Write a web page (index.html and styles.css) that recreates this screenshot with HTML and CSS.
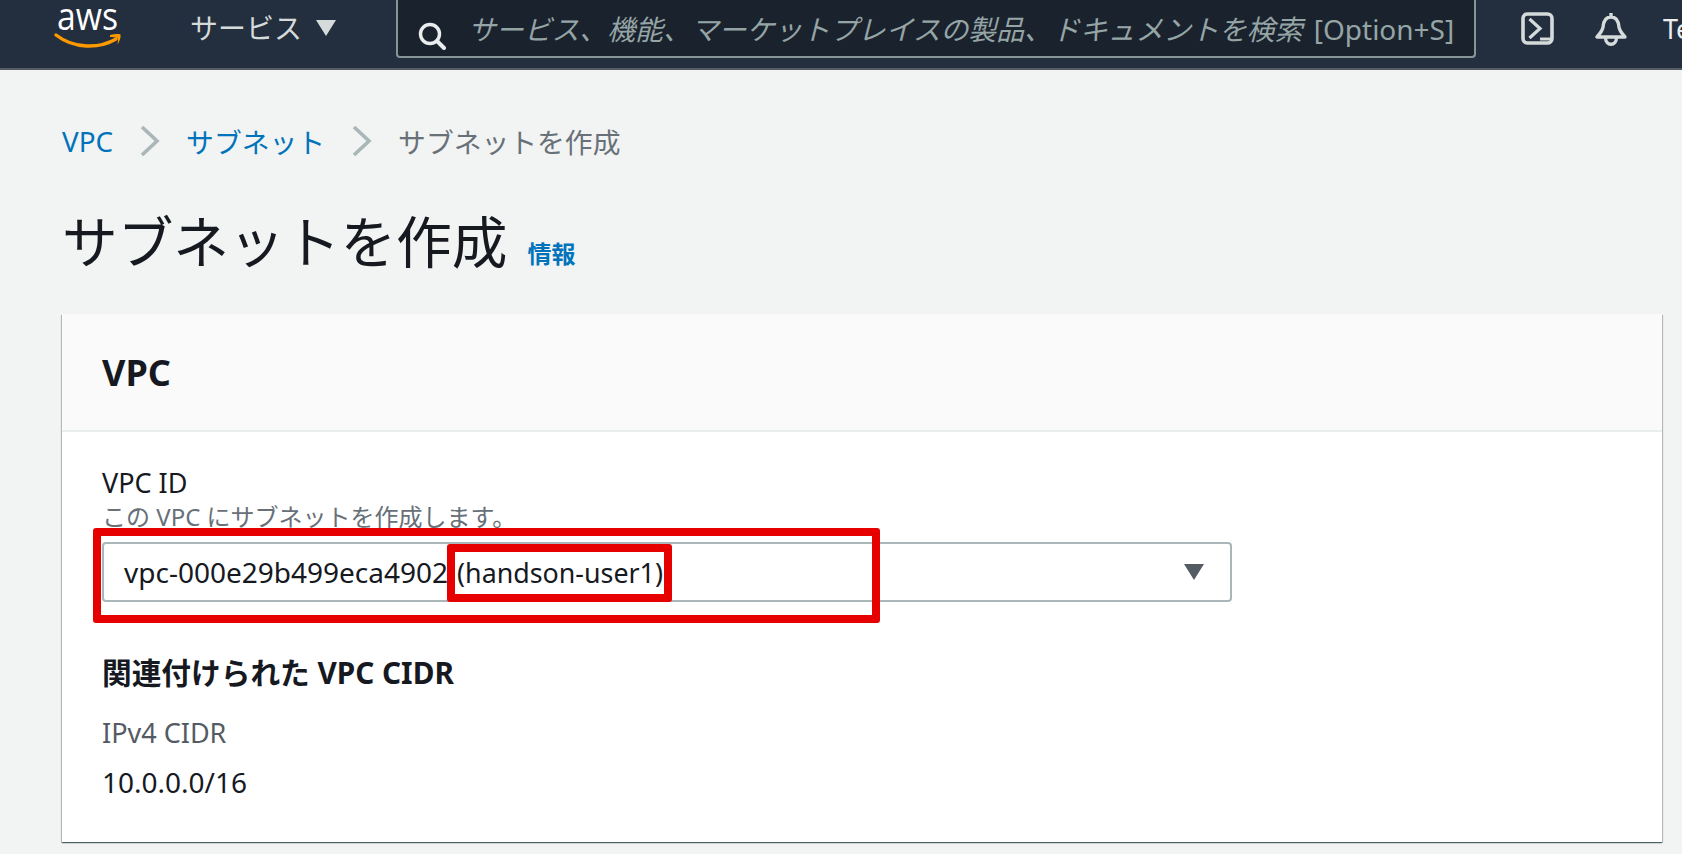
FILE: index.html
```html
<!DOCTYPE html>
<html lang="ja">
<head>
<meta charset="utf-8">
<title>サブネットを作成</title>
<link rel="stylesheet" href="styles.css">
</head>
<body>
<header class="topbar">
  <svg class="logo" width="70" height="50" viewBox="0 0 70 50">
    <text class="logo-text" x="4" y="30" textLength="61" lengthAdjust="spacingAndGlyphs">aws</text>
    <path d="M3 35C21 49 46 49 63 39" fill="none" stroke="#f90" stroke-width="3.4" stroke-linecap="round"/>
    <path d="M57 35C61 34 65 33.700 67.500 34.500C68 37.500 66.500 41.500 64.500 44.500C65 41.500 65.400 39.500 64.600 38.100C63 37.500 60 37 57 37Z" fill="#f90"/>
  </svg>
  <div class="services">
    <span>サービス</span>
    <svg class="services-caret" width="20" height="16" viewBox="0 0 20 16"><path d="M0 0H20L10 16Z" fill="#d5dbdb"/></svg>
  </div>
  <div class="search">
    <svg class="search-icon" width="28" height="28" viewBox="0 0 28 28">
      <circle cx="12" cy="12" r="9.5" fill="none" stroke="#eaeded" stroke-width="3.4"/>
      <path d="M19 19L26 26" stroke="#eaeded" stroke-width="4" stroke-linecap="round"/>
    </svg>
    <span class="search-text">サービス、機能、マーケットプレイスの製品、ドキュメントを検索 <span class="search-key">[Option+S]</span></span>
  </div>
  <svg class="tool-icon terminal" width="33" height="33" viewBox="0 0 33 33">
    <rect x="2" y="2" width="29" height="29" rx="4.500" fill="none" stroke="#d5dbdb" stroke-width="3.600"/>
    <path d="M8.500 7L19 16.500L8.500 26" fill="none" stroke="#d5dbdb" stroke-width="3.200"/>
    <path d="M19 27H31" stroke="#d5dbdb" stroke-width="3"/>
  </svg>
  <svg class="tool-icon bell" width="32" height="34" viewBox="0 0 32 34">
    <path d="M16 1V5M16 5C10 5 8.500 10 8 15C7.500 19 5 21.500 2 25H30C27 21.500 24.500 19 24 15C23.500 10 22 5 16 5Z" fill="none" stroke="#d5dbdb" stroke-width="3.400" stroke-linejoin="round"/>
    <path d="M10.500 25.500C10.500 34.500 21.500 34.500 21.500 25.500" fill="none" stroke="#d5dbdb" stroke-width="3.400"/>
  </svg>
  <span class="account">Te</span>
</header>

<main class="page">
  <nav class="crumbs">
    <a class="link">VPC</a>
    <svg class="crumb-sep" width="20" height="30" viewBox="0 0 20 30"><path d="M2 1L17 15L2 29" fill="none" stroke="#aab7b8" stroke-width="3.600"/></svg>
    <a class="link">サブネット</a>
    <svg class="crumb-sep" width="20" height="30" viewBox="0 0 20 30"><path d="M2 1L17 15L2 29" fill="none" stroke="#aab7b8" stroke-width="3.600"/></svg>
    <span class="crumb-current">サブネットを作成</span>
  </nav>

  <div class="title-row">
    <h1 class="title">サブネットを作成</h1>
    <a class="link info">情報</a>
  </div>

  <section class="card">
    <div class="card-head"><h2 class="card-title">VPC</h2></div>
    <div class="card-body">
      <div class="field-label">VPC ID</div>
      <div class="field-desc">この VPC にサブネットを作成します。</div>
      <div class="select">
        <span class="select-value"><span class="select-id">vpc-000e29b499eca4902</span> <span class="select-name">(handson-user1)</span></span>
        <svg width="20" height="16" viewBox="0 0 20 16"><path d="M0 0H20L10 16Z" fill="#545b64"/></svg>
      </div>
      <h3 class="sub-title">関連付けられた VPC CIDR</h3>
      <div class="kv-key">IPv4 CIDR</div>
      <div class="kv-value">10.0.0.0/16</div>
    </div>
  </section>

  <div class="mark mark-outer"></div>
  <div class="mark mark-inner"></div>
</main>
</body>
</html>
```
FILE: styles.css
```css
* { box-sizing: border-box; }
html, body { margin: 0; height: 100%; }
body {
  height: 854px;
  overflow: hidden;
  background: #f2f3f3;
  color: #16191f;
  font-family: "Noto Sans", "Noto Sans CJK JP", sans-serif;
  font-size: 27px;
}
.topbar {
  display: flex;
  align-items: flex-start;
  height: 70px;
  background: #232f3e;
  border-bottom: 2px solid #545b64;
  overflow: hidden;
}
.logo { margin: 0 0 0 53px; flex: none; }
.logo-text { font-family: "Open Sans", sans-serif; font-size: 38px; font-weight: 500; fill: #fff; }
.services {
  display: flex;
  align-items: center;
  gap: 14px;
  width: 206px;
  margin-left: 67px;
  height: 54px;
  color: #d5dbdb;
  font-size: 28px;
  flex: none;
}
.services-caret { margin-top: 2px; }
.search {
  display: flex;
  align-items: center;
  flex: none;
  width: 1080px;
  height: 58px;
  background: #1a222d;
  border: 2px solid #879596;
  border-top: 0;
  border-radius: 0 0 4px 4px;
  padding-left: 20px;
}
.search-icon { flex: none; margin: 16px 0 0; }
.search-text {
  margin: -1px 0 0 22px;
  color: #95a5a6;
  font-style: italic;
  font-size: 27.85px;
  white-space: nowrap;
}
.search-key { margin-left: 4px; font-style: normal; font-size: 28px; }
.tool-icon { flex: none; margin-top: 12px; }
.terminal { margin-left: 45px; }
.bell { margin-left: 41px; }
.account { margin: 10px 0 0 36px; color: #eaeded; font-size: 27px; white-space: nowrap; }

.page { position: relative; padding: 51px 20px 0 62px; }
.link { color: #0073bb; }
.crumbs { display: flex; align-items: center; height: 40px; font-size: 27.8px; }
.crumb-sep { margin: 0 26px 0 27px; flex: none; }
.crumb-current { color: #687078; }
.title-row { display: flex; align-items: baseline; margin-top: 45px; height: 70px; }
.title { margin: 0; font-size: 55.7px; font-weight: 400; line-height: 70px; }
.info { margin-left: 20px; font-size: 24px; font-weight: 700; }

.card {
  margin-top: 38px;
  width: 1600px;
  height: 528px;
  background: #fff;
  box-shadow: 0 1px 1px 0 rgba(0, 28, 36, .5), 1px 1px 1px 0 rgba(0, 28, 36, .2), -1px 1px 1px 0 rgba(0, 28, 36, .2);
}
.card-head {
  display: flex;
  align-items: center;
  height: 118px;
  padding-left: 40px;
  background: #fafafa;
  border-bottom: 2px solid #eaeded;
}
.card-title { margin: 0; font-size: 36px; font-weight: 700; }
.card-body { padding: 32px 40px 0; }
.field-label { line-height: 38px; }
.field-desc { line-height: 30px; color: #687078; font-size: 24px; margin-bottom: 1px; }
.select {
  display: flex;
  align-items: center;
  justify-content: space-between;
  width: 1130px;
  height: 60px;
  margin-top: 10px;
  padding: 0 26px 0 20px;
  border: 2px solid #aab7b8;
  border-radius: 4px;
}
.select-value { white-space: pre; }
.select-id { font-size: 28px; }
.select-name { margin-left: 2px; font-size: 26.8px; }
.sub-title { margin: 51px 0 0; font-size: 29.7px; font-weight: 700; line-height: 40px; }
.kv-key { margin-top: 21px; color: #545b64; line-height: 38px; }
.kv-value { margin-top: 11px; font-size: 28px; line-height: 38px; }

.mark { position: absolute; border: solid #e60000; border-width: 8px; border-radius: 3px; }
.mark-outer { left: 93px; top: 458px; width: 787px; height: 95px; }
.mark-inner { left: 447px; top: 474px; width: 225px; height: 58px; }
```
